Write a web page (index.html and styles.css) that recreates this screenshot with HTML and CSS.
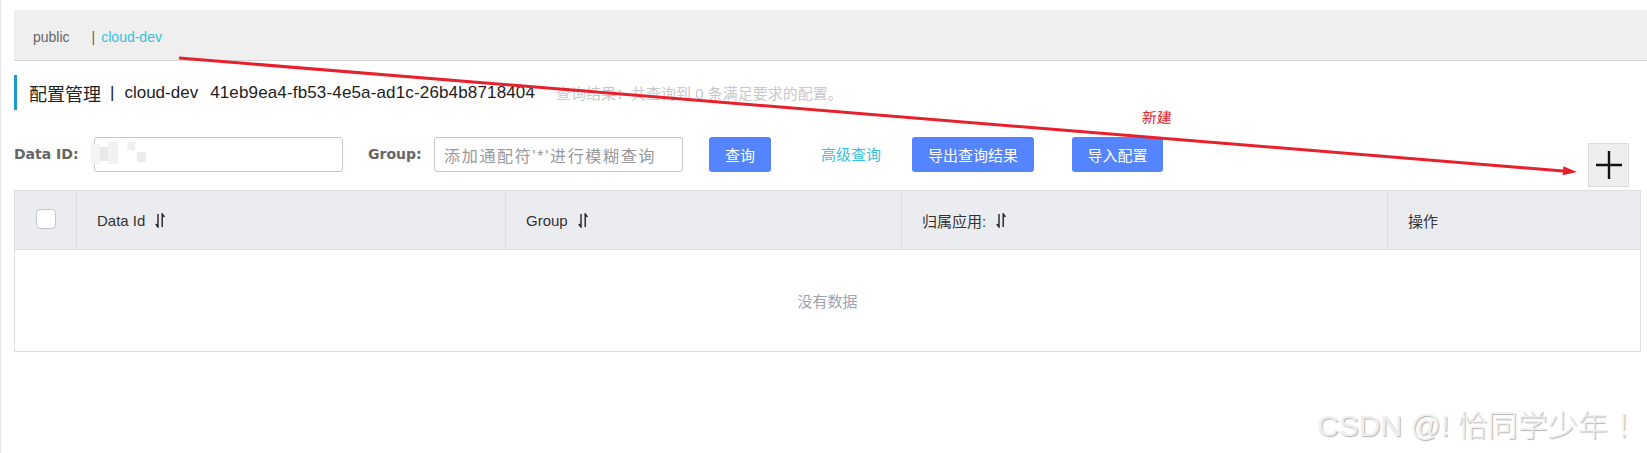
FILE: index.html
```html
<!DOCTYPE html>
<html lang="zh">
<head>
<meta charset="utf-8">
<title>配置管理</title>
<link rel="stylesheet" href="styles.css">
</head>
<body>
<div class="page">
  <div class="ns-bar">
    <span class="ns-item">public</span>
    <span class="ns-sep">|</span>
    <span class="ns-item ns-active">cloud-dev</span>
  </div>

  <div class="title-row">
    <span class="title-main">配置管理</span>
    <span class="title-sep">|</span>
    <span class="title-ns">cloud-dev</span>
    <span class="title-id">41eb9ea4-fb53-4e5a-ad1c-26b4b8718404</span>
    <span class="title-sub">查询结果：共查询到 0 条满足要求的配置。</span>
  </div>

  <div class="form-row">
    <label class="form-label label-id">Data ID:</label>
    <div class="input input-id">
      <span class="blur b1"></span><span class="blur b2"></span><span class="blur b3"></span><span class="blur b4"></span><span class="blur b5"></span>
    </div>
    <label class="form-label label-group">Group:</label>
    <div class="input input-group"><span class="placeholder">添加通配符'*'进行模糊查询</span></div>
    <button class="btn btn-query">查询</button>
    <a class="link-adv">高级查询</a>
    <button class="btn btn-export">导出查询结果</button>
    <button class="btn btn-import">导入配置</button>
    <button class="btn-add" aria-label="新建">
      <svg width="26" height="28" viewBox="0 0 26 28"><path d="M13 0 V28 M0 14 H26" stroke="#111" stroke-width="2.4" fill="none"/></svg>
    </button>
  </div>

  <div class="table">
    <div class="thead">
      <div class="th th-check"><span class="checkbox"></span></div>
      <div class="th">Data Id<svg class="sort" width="10" height="15" viewBox="0 0 10 15"><path d="M3 1 V14 L0.8 11 M7.2 14 V1 L9.4 4" stroke="#222" stroke-width="1.4" fill="none"/></svg></div>
      <div class="th">Group<svg class="sort" width="10" height="15" viewBox="0 0 10 15"><path d="M3 1 V14 L0.8 11 M7.2 14 V1 L9.4 4" stroke="#222" stroke-width="1.4" fill="none"/></svg></div>
      <div class="th">归属应用:<svg class="sort" width="10" height="15" viewBox="0 0 10 15"><path d="M3 1 V14 L0.8 11 M7.2 14 V1 L9.4 4" stroke="#222" stroke-width="1.4" fill="none"/></svg></div>
      <div class="th th-last">操作</div>
    </div>
    <div class="tbody">没有数据</div>
  </div>

  <svg class="annot-arrow" width="1647" height="453" viewBox="0 0 1647 453">
    <line x1="179" y1="58" x2="1563" y2="171" stroke="#e8202b" stroke-width="3"/>
    <polygon points="1577,172 1563.4,166.2 1562.6,175.2" fill="#e8202b"/>
  </svg>
  <span class="annot-text">新建</span>

  <div class="watermark">CSDN @! 恰同学少年 ！</div>
</div>
</body>
</html>
```

FILE: styles.css
```css
html, body {
  margin: 0;
  padding: 0;
  background: #fff;
}
body {
  font-family: "Liberation Sans", "Noto Sans CJK SC", sans-serif;
  color: #333;
}
.page {
  position: relative;
  box-sizing: border-box;
  height: 453px;
  overflow: hidden;
  border-left: 1px solid #e4e4e4;
  padding: 10px 0 0 13px;
}

/* namespace bar */
.ns-bar {
  display: flex;
  align-items: center;
  box-sizing: border-box;
  height: 51px;
  padding: 4px 0 0 19px;
  background: #efefef;
  border-bottom: 1px solid #d4d4d4;
  font-size: 14px;
}
.ns-item { color: #666; }
.ns-sep { color: #6b5a50; margin: 0 6px 0 22px; }
.ns-active { color: #33bfe0; }

/* title */
.title-row {
  display: flex;
  align-items: center;
  height: 35px;
  margin-top: 14px;
  border-left: 3px solid #1d99d6;
  padding-left: 12px;
  font-size: 17px;
  color: #222;
}
.title-main { font-size: 18px; }
.title-sep { margin: 0 10px 0 9px; }
.title-id { margin-left: 12px; letter-spacing: 0.15px; }
.title-sub {
  margin-left: 21px;
  font-size: 15px;
  color: #c8c8c8;
}

/* search form */
.form-row {
  display: flex;
  align-items: flex-start;
  margin-top: 27px;
}
.form-label {
  font-family: "DejaVu Sans", sans-serif;
  font-weight: bold;
  font-size: 14px;
  color: #666;
  line-height: 35px;
}
.label-id { width: 80px; }
.label-group { width: 66px; margin-left: 25px; }
.input {
  position: relative;
  box-sizing: border-box;
  width: 249px;
  height: 35px;
  border: 1px solid #c4c6cf;
  border-radius: 3px;
  background: #fff;
  display: flex;
  align-items: center;
  padding-left: 9px;
}
.placeholder {
  font-size: 16px;
  letter-spacing: 1.7px;
  color: #999;
  white-space: nowrap;
}
.blur {
  position: absolute;
  background: #efefef;
}
.b1 { left: -4px; top: 6px; width: 9px; height: 20px; background: #f4f4f4; }
.b2 { left: 5px; top: 9px; width: 8px; height: 14px; background: #e9e9e9; }
.b3 { left: 13px; top: 4px; width: 10px; height: 22px; background: #f2f2f2; }
.b4 { left: 32px; top: 4px; width: 8px; height: 8px; background: #f0f0f0; }
.b5 { left: 42px; top: 14px; width: 9px; height: 10px; background: #ececec; }

.btn {
  box-sizing: border-box;
  height: 35px;
  border: none;
  border-radius: 3px;
  background: #5584ff;
  color: #fff;
  font-family: inherit;
  font-size: 15px;
  padding: 0;
}
.btn-query { width: 62px; margin-left: 26px; }
.btn-export { width: 122px; margin-left: 31px; }
.btn-import { width: 91px; margin-left: 38px; }
.link-adv {
  margin-left: 50px;
  width: 60px;
  line-height: 35px;
  font-size: 15px;
  color: #33c3e0;
  white-space: nowrap;
}
.btn-add {
  box-sizing: border-box;
  width: 41px;
  height: 44px;
  margin: 6px 18px 0 auto;
  padding: 0;
  background: #eeeeee;
  border: 1px solid #dcdcdc;
  display: flex;
  align-items: center;
  justify-content: center;
}

/* table */
.table {
  margin-top: 3px;
  margin-right: 6px;
  border: 1px solid #dcdee3;
}
.thead {
  display: grid;
  grid-template-columns: 62px 429px 396px 486px 1fr;
  height: 58px;
  background: #ebecf0;
  border-bottom: 1px solid #dcdee3;
}
.th {
  display: flex;
  align-items: center;
  padding-left: 20px;
  border-right: 1px solid #dcdee3;
  font-size: 15px;
  color: #333;
  white-space: nowrap;
}
.th-last { border-right: none; }
.th-check {
  padding-left: 0;
  justify-content: center;
}
.checkbox {
  box-sizing: border-box;
  width: 20px;
  height: 20px;
  border: 1px solid #c4c6cf;
  border-radius: 4px;
  background: #fff;
  margin-top: -3px;
}
.sort { margin-left: 10px; }
.tbody {
  height: 101px;
  display: flex;
  align-items: center;
  justify-content: center;
  font-size: 15px;
  color: #a0a2ad;
}

/* annotation overlay */
.annot-arrow {
  position: absolute;
  left: -1px;
  top: 0;
  pointer-events: none;
}
.annot-text {
  position: absolute;
  left: 1141px;
  top: 106px;
  font-size: 15px;
  color: #e5232a;
  transform: skewX(-4deg);
}
.watermark {
  position: absolute;
  right: 1px;
  top: 408px;
  font-size: 30px;
  line-height: 36px;
  font-weight: 300;
  color: #efefef;
  text-shadow: 1px 1px 1px rgba(0, 0, 0, 0.3);
  white-space: nowrap;
}
```
